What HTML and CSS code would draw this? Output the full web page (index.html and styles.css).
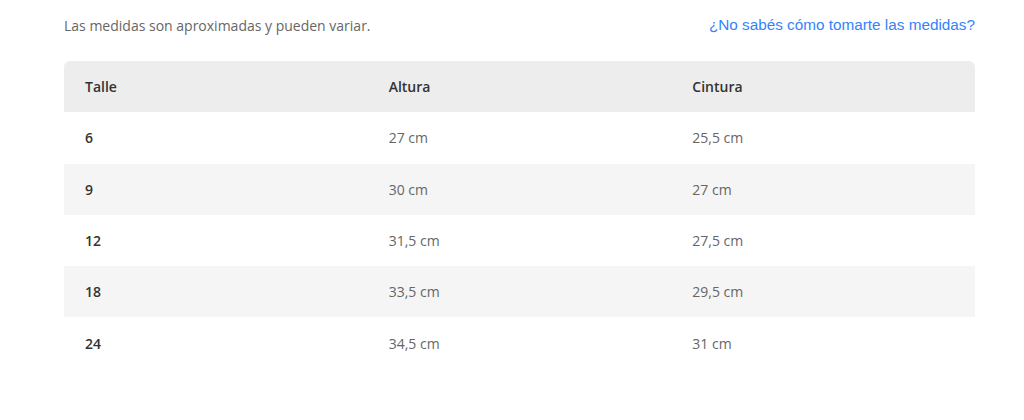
FILE: index.html
```html
<!DOCTYPE html>
<html lang="es">
<head>
<meta charset="utf-8">
<link rel="stylesheet" href="styles.css">
</head>
<body>
<div class="wrap">
  <div class="top">
    <p class="note">Las medidas son aproximadas y pueden variar.</p>
    <a class="help" href="#">¿No sabés cómo tomarte las medidas?</a>
  </div>
  <table class="sizes">
    <thead>
      <tr><th>Talle</th><th>Altura</th><th>Cintura</th></tr>
    </thead>
    <tbody>
      <tr><td>6</td><td>27 cm</td><td>25,5 cm</td></tr>
      <tr><td>9</td><td>30 cm</td><td>27 cm</td></tr>
      <tr><td>12</td><td>31,5 cm</td><td>27,5 cm</td></tr>
      <tr><td>18</td><td>33,5 cm</td><td>29,5 cm</td></tr>
      <tr><td>24</td><td>34,5 cm</td><td>31 cm</td></tr>
    </tbody>
  </table>
</div>
</body>
</html>
```
FILE: styles.css
```css
html, body { margin: 0; padding: 0; background: #fff; }
body { font-family: "Open Sans", Lato, sans-serif; }
.wrap { padding: 0 49px 0 64px; }
.top {
  display: flex;
  justify-content: space-between;
  align-items: center;
  height: 50px;
}
.note { margin: 0; font-size: 14px; color: #666; }
.help {
  font-family: "Liberation Sans", Arial, sans-serif;
  font-size: 15.3px;
  color: #3483fa;
  text-decoration: none;
}
.sizes {
  width: 100%;
  margin-top: 11px;
  border-collapse: separate;
  border-spacing: 0;
  table-layout: fixed;
}
.sizes th, .sizes td {
  text-align: left;
  padding: 0 21px;
  height: 51.3px;
  font-size: 14px;
}
.sizes th {
  background: #ededed;
  color: #333;
  font-weight: 600;
}
.sizes th:first-child { border-top-left-radius: 6px; }
.sizes th:last-child { border-top-right-radius: 6px; }
.sizes td { color: #666; }
.sizes td:first-child { color: #333; font-weight: 600; }
.sizes tbody tr:nth-child(even) td { background: #f5f5f5; }
```
